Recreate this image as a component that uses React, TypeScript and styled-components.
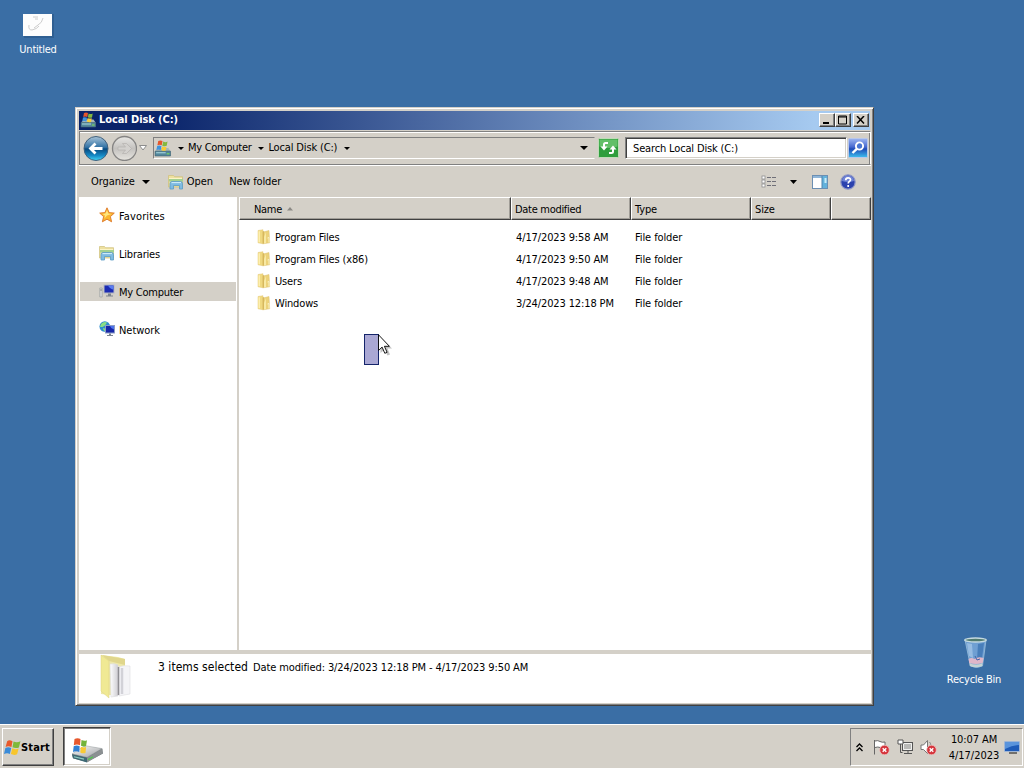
import React from "react";
import styled, { createGlobalStyle, css } from "styled-components";

const Global = createGlobalStyle`
  * { box-sizing: border-box; }
  html, body, #root { height: 100%; margin: 0; }
  body {
    overflow: hidden;
    font: 11px/14px "DejaVu Sans Condensed", "DejaVu Sans", Tahoma, sans-serif;
    color: #000;
    cursor: default;
  }
  svg { display: block; flex: none; }
`;

const face = "#d4d0c8";

const Desktop = styled.div`
  position: relative;
  height: 768px;
  width: 1024px;
  background: #3a6ea5;
  display: flex;
  flex-direction: column;
  justify-content: flex-end;
`;

const Text = styled.span<{ $ls?: number; $size?: number; $bold?: boolean }>`
  white-space: nowrap;
  letter-spacing: ${(p) => p.$ls ?? -0.15}px;
  font-size: ${(p) => p.$size ?? 11}px;
  font-weight: ${(p) => (p.$bold ? 700 : 400)};
`;

const Shortcut = styled.div<{ $x: number; $y: number; $gap: number }>`
  position: absolute;
  left: ${(p) => p.$x}px;
  top: ${(p) => p.$y}px;
  width: 76px;
  display: flex;
  flex-direction: column;
  align-items: center;
  gap: ${(p) => p.$gap}px;
  color: #fff;
`;

/* ---------- window ---------- */

const Window = styled.section`
  position: absolute;
  left: 75px;
  top: 107px;
  width: 799px;
  height: 599px;
  padding: 2px;
  display: flex;
  flex-direction: column;
  background: ${face};
  border: 1px solid;
  border-color: ${face} #404040 #404040 ${face};
  box-shadow: inset 1px 1px #fff, inset -1px -1px #808080;
`;

const TitleBar = styled.header`
  height: 19px;
  margin: 1px 1px 0;
  padding: 0 1px 2px 1px;
  display: flex;
  align-items: center;
  color: #fff;
  background: linear-gradient(90deg, #0a246a 10%, #a6caf0 93%);
`;

const Title = styled(Text)`
  flex: 1;
  margin-left: 3px;
  padding-top: 1px;
`;

const CaptionButton = styled.button<{ $gap?: boolean }>`
  width: 16px;
  height: 14px;
  padding: 0;
  margin-left: ${(p) => (p.$gap ? 2 : 0)}px;
  display: flex;
  align-items: center;
  justify-content: center;
  background: ${face};
  border: 1px solid;
  border-color: #fff #404040 #404040 #fff;
  box-shadow: inset -1px -1px #808080;
`;

const NavBar = styled.nav`
  height: 34px;
  margin: 1px 0 0 1px;
  padding: 0 1px 0 3px;
  display: flex;
  align-items: center;
  border: 1px solid;
  border-color: #808080 #fff #808080 #808080;
  box-shadow: inset 0 1px #fff, 0 1px #fff, inset -1px 0 #808080;
`;

const Address = styled.div`
  width: 442px;
  height: 22px;
  margin-left: 6px;
  display: flex;
  align-items: center;
  border: 1px solid;
  border-color: #808080 ${face} #fff #808080;
`;

const Crumb = styled.span`
  display: flex;
  align-items: center;
  gap: 4px;
  margin-right: 7px;
`;

const Spacer = styled.span`
  flex: 1;
`;

const SearchField = styled.div`
  width: 222px;
  height: 22px;
  margin: 0 1px 0 6px;
  padding: 1px 0 0 7px;
  display: flex;
  align-items: center;
  background: #fff;
  border: 1px solid;
  border-color: #808080 #fff #fff #808080;
  box-shadow: inset 1px 1px #404040, inset -1px -1px ${face};
`;

const Toolbar = styled.div`
  height: 32px;
  padding: 1px 15px 0 13px;
  display: flex;
  align-items: center;
`;

const Body = styled.div`
  height: 453px;
  margin: 0 0 0 1px;
  display: flex;
`;

const Sidebar = styled.aside`
  width: 158px;
  padding: 9px 1px;
  background: #fff;
  display: flex;
  flex-direction: column;
  gap: 19px;
`;

const SideItem = styled.div<{ $active?: boolean }>`
  height: 19px;
  padding-left: 19px;
  display: flex;
  align-items: center;
  gap: 4px;
  background: ${(p) => (p.$active ? face : "transparent")};

  ${Text} {
    padding-top: 2px;
  }

  svg {
    margin-bottom: 1px;
  }
`;

const Files = styled.main`
  flex: 1;
  margin-left: 2px;
  background: #fff;
`;

const columns = css`
  display: grid;
  grid-template-columns: 272px 120px 120px 80px 40px;
`;

const HeaderRow = styled.div`
  ${columns}
  height: 23px;
  margin-bottom: 7px;
`;

const HeaderCell = styled.div<{ $pad?: number }>`
  padding: 2px 0 0 ${(p) => p.$pad ?? 3}px;
  display: flex;
  align-items: center;
  gap: 5px;
  background: ${face};
  border: 1px solid;
  border-color: #fff #404040 #404040 #fff;
  box-shadow: inset -1px -1px #a09d97;
`;

const FileRow = styled.div`
  ${columns}
  height: 22px;
  align-items: center;
`;

const FileName = styled.div`
  padding-left: 18px;
  display: flex;
  align-items: center;
  gap: 3px;

  svg {
    margin-bottom: 2px;
  }
`;

const Cell = styled.div<{ $pad?: number }>`
  padding-left: ${(p) => p.$pad ?? 5}px;
  display: flex;
`;

const Details = styled.footer`
  height: 49px;
  margin: 4px 0 0 1px;
  padding-left: 19px;
  display: flex;
  background: #fff;
`;

const DetailsText = styled.div`
  display: flex;
  align-items: baseline;
  gap: 5px;
  margin: 6px 0 0 24px;
`;

/* ---------- selection and pointer ---------- */

const Marquee = styled.div`
  position: absolute;
  left: 364px;
  top: 334px;
  width: 15px;
  height: 31px;
  background: #aaa8d4;
  border: 1px solid #14246a;
`;

const Pointer = styled.div`
  position: absolute;
  left: 378px;
  top: 334px;
`;

/* ---------- taskbar ---------- */

const Taskbar = styled.div`
  height: 44px;
  padding: 2px 1px 1px 2px;
  display: flex;
  background: ${face};
  border-top: 1px solid #fff;
`;

const StartButton = styled.button`
  width: 52px;
  height: 38px;
  margin-top: 1px;
  padding: 0 0 0 1px;
  display: flex;
  align-items: center;
  gap: 0;
  font-family: inherit;
  color: #000;
  background: ${face};
  border: 1px solid;
  border-color: #fff #404040 #404040 #fff;
  box-shadow: inset -1px -1px #808080;
`;

const TaskButton = styled.div`
  width: 48px;
  height: 39px;
  margin-left: 9px;
  padding: 7px 1px 0 0;
  display: flex;
  align-items: center;
  justify-content: center;
  background: #fff;
  border: 1px solid;
  border-color: #404040 #fff #fff #404040;
  box-shadow: inset 1px 1px #808080, inset -1px -1px ${face};
`;

const Tray = styled.div`
  width: 173px;
  height: 38px;
  margin-top: 1px;
  padding-left: 5px;
  display: flex;
  align-items: center;
  border: 1px solid;
  border-color: #808080 #fff #fff #808080;
`;

const TrayIcons = styled.div`
  display: flex;
  align-items: center;
  gap: 7px;
  margin-left: 10px;
`;

const Clock = styled.time`
  width: 54px;
  margin-left: 10px;
  padding-top: 2px;
  display: flex;
  flex-direction: column;
  align-items: center;
  line-height: 16px;
`;

/* ---------- drawings ---------- */

const Triangle = ({ w = 6 }: { w?: number }) => (
  <svg width={w} height={Math.ceil(w / 2)} viewBox="0 0 10 5" preserveAspectRatio="none">
    <path d="M0 0h10L5 5z" />
  </svg>
);

const Flag = ({ size = 17 }: { size?: number }) => (
  <svg width={size} height={size} viewBox="0 0 16 16">
    <path d="M3 2Q5 .5 8 2L7 7.5Q4 6.2 1.5 7.5z" fill="#e8592b" />
    <path d="M9 2.4Q12 3.8 15.500 2.200L14 8Q11 9.200 8 7.800z" fill="#7fb93a" />
    <path d="M1.300 8.500Q4 7.200 6.800 8.500L5.500 14Q3 12.600 0 14z" fill="#3a8bd8" />
    <path d="M7.800 8.800Q10.500 10.200 13.800 9L12.300 14.400Q9.500 15.600 6.500 14.200z" fill="#f8c62c" />
  </svg>
);

const DriveIcon = ({ w, h }: { w: number; h: number }) => (
  <svg width={w} height={h} viewBox="0 0 16 16" preserveAspectRatio="none">
    <path d="M1 10.500l3-3h9.500l2 3v4.500H1z" fill="#a9b7b8" />
    <path d="M1 10.500h14.500V15H1z" fill="#54879b" stroke="#3d6272" strokeWidth=".6" />
    <path d="M2 12h9" stroke="#a8d6df" />
    <path d="M12 13h2.500" stroke="#7ce052" />
    <path d="M4 1q2-1.200 4 0L7.300 5Q5.500 4 3.200 5z" fill="#e5562b" />
    <path d="M8.700 1.500q2 1 4 0L12 5.500Q10 6.300 7.800 5.300z" fill="#84b93f" />
    <path d="M3 5.600q2-.8 4 .2L6.300 9.500Q4 8.500 2.200 9.500z" fill="#3f93dc" />
    <path d="M7.600 6q2 1 4.200.3L11 10q-2 .6-4-.4z" fill="#f9cc37" />
  </svg>
);

const BigDrive = () => (
  <svg width="34" height="25" viewBox="0 0 34 26" preserveAspectRatio="none">
    <defs>
      <linearGradient id="lid" x1="0" y1="0" x2="1" y2="1">
        <stop offset="0" stopColor="#fff" />
        <stop offset="1" stopColor="#9d9fa2" />
      </linearGradient>
    </defs>
    <path d="M2 17L15 9l17 2 1 5-16 9L3 21z" fill="#6b7579" />
    <path d="M2 16.500L15 8l17 3-15 9z" fill="url(#lid)" stroke="#a6abad" strokeWidth=".6" />
    <path d="M2 17l15 3.500v5L3 21z" fill="#3f6873" />
    <path d="M4 19.500l10 2.500" stroke="#8ecbc2" strokeWidth="1.200" />
    <path d="M17 20.500L32.500 11v5L17 25.500z" fill="#8b9092" />
    <path d="M18 22.500l5-3" stroke="#4fc74f" strokeWidth="1.500" />
    <path d="M4.500 1q3-1.500 6 0L10 7.500Q7 6 3.800 7.500z" fill="#e6582e" />
    <path d="M11.500 2q3 1.500 5.500.3L16 8.500q-2.500 1-5-.4z" fill="#74b43b" />
    <path d="M3.700 8.500q3-1.400 6 0L9.200 14.500Q6 13 3 14.500z" fill="#2f7fd3" />
    <path d="M10.800 9q2.800 1.400 5.300.4L15.500 15.500q-2.700 1-5.200-.5z" fill="#f8ca35" />
  </svg>
);

const BackIcon = () => (
  <svg width="26" height="26" viewBox="0 0 26 26">
    <defs>
      <linearGradient id="orb" x1="0" y1="0" x2="0" y2="1">
        <stop offset="0" stopColor="#a9c4d8" />
        <stop offset=".45" stopColor="#3272a5" />
        <stop offset=".52" stopColor="#074a80" />
        <stop offset=".8" stopColor="#168bc7" />
        <stop offset="1" stopColor="#45d6f5" />
      </linearGradient>
    </defs>
    <circle cx="13" cy="13.500" r="12" fill="url(#orb)" stroke="#42617c" />
    <path d="M19.500 13.500H8M12.500 8.500L7.500 13.500l5 5" fill="none" stroke="#fff" strokeWidth="2.800" />
  </svg>
);

const ForwardIcon = () => (
  <svg width="26" height="26" viewBox="0 0 26 26">
    <defs>
      <linearGradient id="dim" x1="0" y1="0" x2="0" y2="1">
        <stop offset="0" stopColor="#e8e7e4" />
        <stop offset=".5" stopColor="#c4c2bf" />
        <stop offset="1" stopColor="#e6e4df" />
      </linearGradient>
    </defs>
    <circle cx="13.500" cy="13.500" r="12" fill="url(#dim)" stroke="#858483" strokeWidth="1.300" />
    <path d="M7 12h7.500L11.500 8.500h4l5 5-5 5h-4l3-3.500H7z" fill="#d3d1ce" stroke="#b4b2af" strokeWidth=".7" />
  </svg>
);

const RefreshIcon = () => (
  <svg width="21" height="20" viewBox="0 0 21 20">
    <rect x=".5" y=".5" width="20" height="19" rx="1" fill="#2f9e3d" stroke="#bfdcb8" />
    <path d="M1.500 1.500h18v7q-9 3-18 0z" fill="#62bf68" />
    <path d="M10 5H7.500Q6 5 6 6.500V9" fill="none" stroke="#fff" strokeWidth="2" />
    <path d="M2.500 8.500h7L6 12.500z" fill="#fff" />
    <path d="M11 15h2.500q1.500 0 1.500-1.500V11" fill="none" stroke="#fff" strokeWidth="2" />
    <path d="M11.500 11.500h7L15 7.500z" fill="#fff" />
  </svg>
);

const SearchIcon = () => (
  <svg width="20" height="20" viewBox="0 0 20 20">
    <defs>
      <linearGradient id="glass" x1="0" y1="0" x2="0" y2="1">
        <stop offset="0" stopColor="#9db6f2" />
        <stop offset=".45" stopColor="#4668cf" />
        <stop offset=".55" stopColor="#1f4bb8" />
        <stop offset="1" stopColor="#3fc0ee" />
      </linearGradient>
    </defs>
    <rect x=".5" y=".5" width="19" height="19" rx="1" fill="url(#glass)" stroke="#b9c8ea" />
    <circle cx="11.500" cy="8" r="3.600" fill="#4a76d2" stroke="#fff" strokeWidth="1.900" />
    <path d="M8.800 10.800L4.500 15" stroke="#fff" strokeWidth="2.400" />
  </svg>
);

const LibraryIcon = () => (
  <svg width="16" height="16" viewBox="0 0 16 16">
    <path d="M.5 3V1.500h5l1 1.200h8V13H.5z" fill="#eee0a0" stroke="#cfc078" strokeWidth=".7" />
    <path d="M1 5h14v2.500H1z" fill="#a3d090" />
    <path d="M1 4.500h13" stroke="#fbf4c6" />
    <path d="M2 15V9.500Q2 7.500 4 7.500h8.500q2 0 2 2V15h-3v-3.500h-6V15z" fill="#7fbbe2" stroke="#5b9cc5" strokeWidth=".8" />
    <path d="M3.500 8.600h9.500" stroke="#d4effb" />
  </svg>
);

const StarIcon = () => (
  <svg width="16" height="16" viewBox="0 0 16 16">
    <path d="M8 .8l2.100 4.800 5.200.5-3.900 3.500 1.200 5.200L8 12.200l-4.600 2.600 1.200-5.200L.7 6.100l5.200-.5z" fill="#fbb62f" stroke="#dc7626" strokeWidth=".9" />
    <path d="M8 3l1.300 3.500 3.300.4L8 8.500l-2.600 3L6 8.600 3.500 7l3-.4z" fill="#ffe680" />
  </svg>
);

const ComputerIcon = () => (
  <svg width="16" height="16" viewBox="0 0 16 16">
    <path d="M.8 5h2.400v9H.8z" fill="#d8dadc" stroke="#9a9da0" strokeWidth=".7" />
    <path d="M1.300 7h1.500" stroke="#50565c" strokeWidth=".8" />
    <rect x="5" y="2" width="10" height="8" fill="#1b2bb2" stroke="#b4b8c4" />
    <path d="M9 2.500h5.500v4q-3.500-.3-5.500-4z" fill="#5a7df0" />
    <path d="M9 10.500h3v2H9zM7 12.500h7v1H7z" fill="#7d848e" />
  </svg>
);

const NetworkIcon = () => (
  <svg width="16" height="16" viewBox="0 0 16 16">
    <circle cx="5.800" cy="5.500" r="5.300" fill="#2e8ccf" />
    <path d="M2 3q3-3 6-1.500L6 4.500 3.500 6 1 6zM4 7l4 1-2 2.600q-2-1-2-3.600z" fill="#8ade84" />
    <rect x="6.500" y="4.500" width="9" height="7.500" fill="#1726a8" stroke="#8c9cc6" />
    <path d="M11 5h4v3.500Q12 8 11 5z" fill="#4d72ec" />
    <path d="M10 12.500h2V14h-2zM8 14h6v1H8z" fill="#7b8490" />
  </svg>
);

const FolderIcon = () => (
  <svg width="15" height="16" viewBox="1 0 15 16">
    <path d="M2 1.500l5-.8v14.100l-5-1z" fill="#f0d980" stroke="#e4c978" strokeWidth=".5" />
    <path d="M3.200 2.200v11" stroke="#fff3b8" strokeWidth="1.300" />
    <path d="M7 3l6-1.500.7 12.300L7 14.800z" fill="#ecd27a" stroke="#dcc070" strokeWidth=".5" />
    <path d="M7.300 2v12.500" stroke="#c9a748" strokeWidth=".7" />
    <path d="M8 8l2-5v11.200l-2 .4z" fill="#f8e9a4" />
    <path d="M11.500 9l1.500-.5v5" fill="none" stroke="#fbf2c4" />
  </svg>
);

const BigFolder = () => (
  <svg width="36" height="46" viewBox="0 0 36 46">
    <defs>
      <linearGradient id="sheet" x1="0" y1="0" x2="1" y2="0">
        <stop offset="0" stopColor="#fff" />
        <stop offset="1" stopColor="#cfced3" />
      </linearGradient>
    </defs>
    <path d="M3 1l17 2 7 2v36H12L3 40z" fill="#eee8a8" />
    <path d="M4 1l23 4v6L11 7z" fill="#e0d68c" />
    <path d="M12 10q5-1 8 1v31l-7 1z" fill="url(#sheet)" stroke="#dcdbdd" strokeWidth=".6" />
    <path d="M20 13q6-2 12-1v28l-11 2z" fill="#f4f4f7" stroke="#dedde0" strokeWidth=".6" />
    <path d="M20.500 13v28" stroke="#8f8e93" strokeWidth="1.600" />
    <path d="M24 14v26" stroke="#d2d2d8" strokeWidth="2.500" />
    <path d="M3 1l8 6v37l-8-7z" fill="#f0e994" stroke="#ddd384" strokeWidth=".5" />
  </svg>
);

const ViewIcon = () => (
  <svg width="16" height="14" viewBox="0 0 16 14">
    {[1, 5, 9].map((y) => (
      <g key={y}>
        <rect x="1" y={y} width="3" height="3" fill="#fff" stroke="#8e8e90" strokeWidth=".8" />
        <path d={`M6 ${y + 1.5}h4M11 ${y + 1.5}h4`} stroke="#6f6f78" />
      </g>
    ))}
  </svg>
);

const PaneIcon = () => (
  <svg width="16" height="14" viewBox="0 0 16 14">
    <rect x=".5" y=".5" width="15" height="13" fill="#fff" stroke="#6b8fb3" />
    <path d="M1 2h14" stroke="#8fb5d8" strokeWidth="2" />
    <path d="M10 1h5v12h-5z" fill="#63b2dc" />
    <path d="M12.500 3h2v5h-2z" fill="#c8ecf8" />
    <path d="M10 1v12" stroke="#4e82ac" />
  </svg>
);

const HelpIcon = () => (
  <svg width="16" height="16" viewBox="0 0 16 16">
    <circle cx="8" cy="8" r="7.200" fill="#2c42ae" stroke="#8e97c6" strokeWidth="1.200" />
    <path d="M2 7a6 5.500 0 0 1 12 0q-6 2-12 0" fill="#6f83d6" />
    <path d="M5.700 6.200q0-2.400 2.400-2.400t2.400 2c0 1.600-2.300 1.600-2.300 3.600M8.200 10.900v2" fill="none" stroke="#fff" strokeWidth="1.700" />
  </svg>
);

const PictureIcon = () => (
  <svg width="32" height="26" viewBox="0 0 32 26">
    <path d="M2 2h30v24H2z" fill="#24507f" opacity=".5" />
    <path d="M1 2h29v22H1z" fill="#fdfdfd" />
    <path d="M11 5h5M13 7h3M21 6q-1 5-5 7l-4 3M7 13q-1 5 3 5 5-1 7-4" fill="none" stroke="#bfbfbf" strokeWidth=".8" />
  </svg>
);

const BinIcon = () => (
  <svg width="26" height="32" viewBox="0 0 26 32">
    <path d="M4 3h21l-3.500 26q-6 3-12 0z" fill="#6f9fd2" stroke="#9cc0dc" strokeWidth=".8" />
    <path d="M6 6l5 1 1 14-4-2z" fill="#a8c9e8" opacity=".7" />
    <path d="M17 7l6-1-2 15-5 2z" fill="#3e75b4" opacity=".8" />
    <path d="M7.500 22q3-2 6 0 4-3 9-1l-.8 5q-7 2-13.500 0z" fill="#dfb7c9" />
    <path d="M8.300 26q7 3 13.200 0l-.4 3q-6 2.500-12.300 0z" fill="#c4d3d3" />
    <path d="M14 19l2 4 3-1" stroke="#4462a8" fill="none" />
    <ellipse cx="14.500" cy="3" rx="10.800" ry="2" fill="#507b6e" stroke="#c5d9e0" strokeWidth="1.300" />
  </svg>
);

const ErrorBadge = () => (
  <g>
    <circle cx="11.500" cy="11" r="4.800" fill="#d5343c" stroke="#eec4c0" strokeWidth=".8" />
    <path d="M9.700 9.200l3.600 3.600M13.300 9.200l-3.600 3.600" stroke="#fff" strokeWidth="1.400" />
  </g>
);

const FlagTrayIcon = () => (
  <svg width="17" height="16" viewBox="0 0 17 16">
    <path d="M1.500 1v14.500M2 2q3-1 5 .5 2 1.200 5 .5v6q-3 .8-5-.5Q5 7.500 2 8.500" fill="#fff" stroke="#666" />
    <ErrorBadge />
  </svg>
);

const NetTrayIcon = () => (
  <svg width="16" height="16" viewBox="0 0 16 16">
    <rect x="5.500" y="3.500" width="10" height="8" fill="#b9b9b7" stroke="#555" />
    <path d="M6.500 4.500h8v6h-8z" fill="none" stroke="#fff" strokeWidth=".8" />
    <path d="M1 1h5v4H1z" fill="#fff" stroke="#555" />
    <path d="M3.500 5v8.500h2M7 14.500h8M11 12v2" fill="none" stroke="#555" />
  </svg>
);

const SoundTrayIcon = () => (
  <svg width="17" height="16" viewBox="0 0 17 16">
    <path d="M1 6h2.500L7.500 1.500v13L3.500 10.500H1z" fill="#fff" stroke="#777" />
    <path d="M9.500 3q1.500 1.500 1.500 4" fill="none" stroke="#888" />
    <ErrorBadge />
  </svg>
);

const DesktopIcon = () => (
  <svg width="16" height="15" viewBox="0 0 16 15">
    <path d="M.5 1.500h15v10H.5z" fill="#1e5bb8" stroke="#b9cbe2" strokeWidth=".6" />
    <path d="M1 2h14v3Q8 5 1 9z" fill="#5a94dc" />
    <path d="M5 12.500h8v1H5z" fill="#111" />
  </svg>
);

const Cursor = () => (
  <svg width="14" height="23" viewBox="0 0 14 23">
    <path d="M2.500 3v16l4-3.500 3 6 2.500-1-2.500-6h4.500z" fill="#777" opacity=".45" />
    <path d="M.5 .8v15.700l3.600-3.400 2.700 6.200 2.300-1-2.700-6h5z" fill="#fff" stroke="#000" strokeWidth=".9" />
  </svg>
);

/* ---------- content ---------- */

const files = [
  { name: "Program Files", date: "4/17/2023 9:58 AM" },
  { name: "Program Files (x86)", date: "4/17/2023 9:50 AM" },
  { name: "Users", date: "4/17/2023 9:48 AM" },
  { name: "Windows", date: "3/24/2023 12:18 PM" },
];

const places = [
  { label: "Favorites", icon: <StarIcon />, ls: 0.12 },
  { label: "Libraries", icon: <LibraryIcon />, ls: -0.2 },
  { label: "My Computer", icon: <ComputerIcon />, active: true, ls: -0.25 },
  { label: "Network", icon: <NetworkIcon />, ls: -0.05 },
];

const Gap = styled.span<{ $w: number }>`
  flex: none;
  width: ${(p) => p.$w}px;
`;

export default function App() {
  return (
    <Desktop>
      <Global />
      <Shortcut $x={0} $y={12} $gap={5}>
        <PictureIcon />
        <Text $ls={-0.22}>Untitled</Text>
      </Shortcut>
      <Shortcut $x={936} $y={637} $gap={4}>
        <BinIcon />
        <Text $ls={-0.25}>Recycle Bin</Text>
      </Shortcut>

      <Window>
        <TitleBar>
          <DriveIcon w={16} h={16} />
          <Title $bold $ls={-0.08}>Local Disk (C:)</Title>
          <CaptionButton>
            <svg width="10" height="8"><path d="M1 6h6v2H1z" /></svg>
          </CaptionButton>
          <CaptionButton>
            <svg width="10" height="10"><path d="M.5 1h8v8h-8zM.5 2h8" fill="none" stroke="#000" /></svg>
          </CaptionButton>
          <CaptionButton $gap>
            <svg width="10" height="8"><path d="M1 0l7 7.500M8 0L1 7.500" stroke="#000" strokeWidth="1.500" /></svg>
          </CaptionButton>
        </TitleBar>

        <NavBar>
          <BackIcon />
          <Gap $w={2} />
          <ForwardIcon />
          <Gap $w={2} />
          <svg width="8" height="6"><path d="M.5.5h7l-3.500 4.500z" fill="#fff" stroke="#8d8d8d" /></svg>
          <Address>
            <DriveIcon w={17} h={17} />
            <Gap $w={7} />
            <Crumb><Triangle /><Text $ls={-0.3}>My Computer</Text></Crumb>
            <Crumb><Triangle /><Text>Local Disk (C:)</Text></Crumb>
            <Triangle />
            <Spacer />
            <Triangle w={8} />
            <Gap $w={6} />
          </Address>
          <Gap $w={3} />
          <RefreshIcon />
          <SearchField><Text>Search Local Disk (C:)</Text></SearchField>
          <SearchIcon />
        </NavBar>

        <Toolbar>
          <Text $ls={-0.08}>Organize</Text>
          <Gap $w={7} />
          <Triangle w={8} />
          <Gap $w={18} />
          <LibraryIcon />
          <Gap $w={3} />
          <Text $ls={0}>Open</Text>
          <Gap $w={16} />
          <Text $ls={-0.15}>New folder</Text>
          <Spacer />
          <ViewIcon />
          <Gap $w={13} />
          <Triangle w={7} />
          <Gap $w={15} />
          <PaneIcon />
          <Gap $w={12} />
          <HelpIcon />
        </Toolbar>

        <Body>
          <Sidebar>
            {places.map((p) => (
              <SideItem key={p.label} $active={p.active}>
                {p.icon}
                <Text $ls={p.ls}>{p.label}</Text>
              </SideItem>
            ))}
          </Sidebar>
          <Files>
            <HeaderRow>
              <HeaderCell $pad={14}>
                <Text $ls={-0.3}>Name</Text>
                <svg width="6" height="6"><path d="M0 3.500L3 0l3 3.500z" fill="#8b8985" /></svg>
              </HeaderCell>
              <HeaderCell><Text $ls={-0.3}>Date modified</Text></HeaderCell>
              <HeaderCell><Text>Type</Text></HeaderCell>
              <HeaderCell><Text>Size</Text></HeaderCell>
              <HeaderCell />
            </HeaderRow>
            {files.map((f) => (
              <FileRow key={f.name}>
                <FileName><FolderIcon /><Text>{f.name}</Text></FileName>
                <Cell><Text $ls={-0.12}>{f.date}</Text></Cell>
                <Cell $pad={4}><Text $ls={-0.1}>File folder</Text></Cell>
              </FileRow>
            ))}
          </Files>
        </Body>

        <Details>
          <BigFolder />
          <DetailsText>
            <Text $size={12} $ls={0.04}>3 items selected</Text>
            <Text $ls={-0.11}>Date modified: 3/24/2023 12:18 PM - 4/17/2023 9:50 AM</Text>
          </DetailsText>
        </Details>
      </Window>

      <Marquee />
      <Pointer><Cursor /></Pointer>

      <Taskbar>
        <StartButton>
          <Flag />
          <Text $bold $ls={0.15}>Start</Text>
        </StartButton>
        <TaskButton><BigDrive /></TaskButton>
        <Spacer />
        <Tray>
          <svg width="7" height="9"><path d="M.5 4L3.500 1l3 3M.5 8l3-3 3 3" fill="none" stroke="#000" strokeWidth="1.300" /></svg>
          <TrayIcons>
            <FlagTrayIcon />
            <NetTrayIcon />
            <SoundTrayIcon />
          </TrayIcons>
          <Clock>
            <Text $ls={-0.1}>10:07 AM</Text>
            <Text $ls={-0.05}>4/17/2023</Text>
          </Clock>
          <Gap $w={3} />
          <DesktopIcon />
        </Tray>
      </Taskbar>
    </Desktop>
  );
}
